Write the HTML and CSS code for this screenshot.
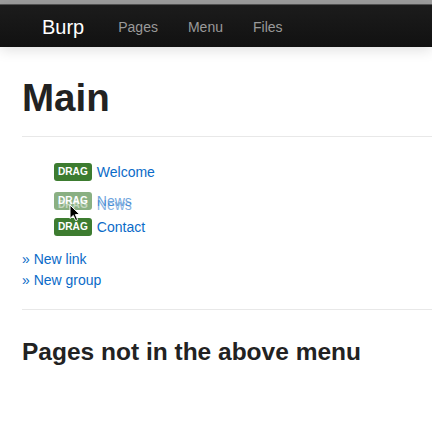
FILE: index.html
```html
<!DOCTYPE html>
<html>
<head>
<meta charset="utf-8">
<link rel="stylesheet" href="styles.css">
</head>
<body>
<div class="topstrip"></div>
<nav class="navbar">
  <a class="brand" href="#">Burp</a>
  <ul class="nav">
    <li><a href="#">Pages</a></li>
    <li><a href="#">Menu</a></li>
    <li><a href="#">Files</a></li>
  </ul>
</nav>
<main class="container">
  <h1 class="title">Main</h1>
  <hr class="rule">
  <div class="menu">
    <ul class="menu-list">
      <li class="menu-item"><span class="label">DRAG</span><a href="#">Welcome</a></li>
      <li class="placeholder"></li>
      <li class="menu-item"><span class="label">DRAG</span><a href="#">Contact</a></li>
    </ul>
    <div class="ghost">
      <div class="ghost-copy ghost-a"><span class="label">DRAG</span><a href="#">News</a></div>
      <div class="ghost-copy ghost-b"><span class="label">DRAG</span><a href="#">News</a></div>
    </div>
    <svg class="cursor" width="12" height="18" viewBox="0 0 12 18">
      <path d="M1 1 L1 14.5 L4.3 11.4 L6.6 16.6 L8.7 15.7 L6.4 10.6 L10.8 10.6 Z" fill="#000" stroke="#fff" stroke-width="1" stroke-linejoin="round"/>
    </svg>
  </div>
  <div class="actions">
    <a href="#">» New link</a>
    <a href="#">» New group</a>
  </div>
  <hr class="rule rule-2">
  <h3 class="subtitle">Pages not in the above menu</h3>
</main>
</body>
</html>
```

FILE: styles.css
```css
html, body {
  margin: 0;
  padding: 0;
  background: #fff;
  font-family: "Liberation Sans", Arial, sans-serif;
  font-size: 14px;
  color: #222;
}

a { text-decoration: none; color: #0b6bc8; }

.topstrip {
  height: 4px;
  background: #9d9d9d;
  border-bottom: 1px solid #555;
}

.navbar {
  position: relative;
  z-index: 1;
  height: 42px;
  display: flex;
  align-items: center;
  background: linear-gradient(#1c1c1c, #111);
  box-shadow: 0 3px 14px rgba(0, 0, 0, 0.13);
}

.brand {
  color: #fff;
  font-size: 20px;
  line-height: 20px;
  padding: 0 19px 0 42px;
  margin-top: 1px;
}

.nav {
  display: flex;
  list-style: none;
  margin: 0;
  padding: 0;
}

.nav a {
  display: block;
  color: #9a9a9a;
  padding: 2px 15px 0;
  line-height: 20px;
}

.container {
  padding: 0 0 0 22px;
}

.title {
  margin: 31px 0 0;
  font-size: 38.5px;
  line-height: 40px;
  font-weight: bold;
  color: #222;
}

.rule {
  margin: 18px 0 0;
  border: 0;
  border-top: 1px solid #e8e8e8;
  height: 0;
}

.menu {
  position: relative;
}

.menu-list {
  list-style: none;
  margin: 0;
  padding: 25px 0 0 32px;
}

.menu-item {
  display: flex;
  align-items: center;
  gap: 5px;
  height: 20px;
  margin-bottom: 6px;
}

.placeholder {
  height: 23px;
  margin-bottom: 6px;
}

.label {
  display: inline-block;
  background: #3d7c30;
  color: #fff;
  font-size: 10.15px;
  font-weight: bold;
  line-height: 14px;
  padding: 2px 4px;
  border-radius: 3px;
}

.menu-item a, .ghost-copy a {
  font-size: 14px;
  line-height: 20px;
}

.ghost {
  position: absolute;
  left: 32px;
  top: 54px;
  width: 120px;
  height: 24px;
}

.ghost-copy {
  position: absolute;
  left: 0;
  display: flex;
  align-items: center;
  gap: 5px;
  height: 20px;
}

.ghost-a {
  top: 0;
  opacity: 0.6;
}

.ghost-b {
  top: 4px;
  opacity: 0.5;
}

.ghost-b .label {
  background: transparent;
}

.cursor {
  position: absolute;
  left: 47px;
  top: 67px;
}

.actions {
  display: flex;
  flex-direction: column;
  padding-top: 6px;
}

.actions a {
  line-height: 21px;
}

.rule-2 {
  margin-top: 18px;
}

.subtitle {
  margin: 27px 0 0;
  font-size: 24.5px;
  line-height: 30px;
  font-weight: bold;
  color: #222;
}
```
